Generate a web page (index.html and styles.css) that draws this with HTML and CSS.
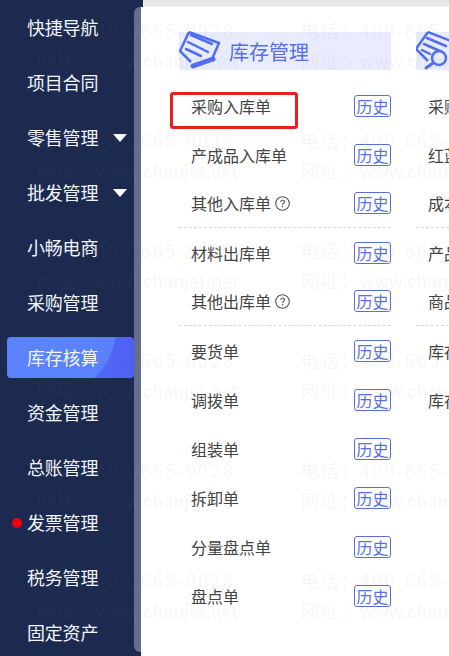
FILE: index.html
```html
<!DOCTYPE html>
<html>
<head>
    <meta charset="utf-8">
    <title>库存核算</title>
    <link rel="stylesheet" href="styles.css">
</head>
<body>
    <div class="sidebar">
        <div class="nav">
            <div class="nav-item">快捷导航</div>
            <div class="nav-item">项目合同</div>
            <div class="nav-item has-sub">零售管理</div>
            <div class="nav-item has-sub">批发管理</div>
            <div class="nav-item">小畅电商</div>
            <div class="nav-item">采购管理</div>
            <div class="nav-item active">库存核算</div>
            <div class="nav-item">资金管理</div>
            <div class="nav-item">总账管理</div>
            <div class="nav-item has-dot">发票管理</div>
            <div class="nav-item">税务管理</div>
            <div class="nav-item">固定资产</div>
        </div>
        <div class="scrollbar"></div>
    </div>

    <div class="main">
        <div class="top-strip"></div>
        <div class="groups">
            <div class="group">
                <div class="group-head">
                    <svg class="head-icon" viewBox="0 0 44 40" width="44" height="40">
                        <path d="M10 1 L1 20 L12 31 M10 1 L40 12 L33 28" fill="none" stroke="#4f6ef2" stroke-width="2.5" stroke-linejoin="round"/>
                        <path d="M12 4 L33 13 M9 11 L29 21 M7 18 L22 25" fill="none" stroke="#4f6ef2" stroke-width="2.5" stroke-linecap="round"/>
                        <path d="M14 35 L34 28" fill="none" stroke="#4f6ef2" stroke-width="5" stroke-linecap="round"/>
                    </svg>
                    <span class="head-title">库存管理</span>
                </div>
                <div class="row"><span>采购入库单</span><a class="history">历史</a></div>
                <div class="row"><span>产成品入库单</span><a class="history">历史</a></div>
                <div class="row split">
                    <span class="with-help">其他入库单
                        <svg class="help" viewBox="0 0 15 15" width="15" height="15">
                            <circle cx="7.5" cy="7.5" r="6.8" fill="none" stroke="#555" stroke-width="1.1"/>
                            <path d="M5.6 6 C5.6 3.6 9.5 3.6 9.5 5.8 C9.5 7.2 7.5 7.2 7.5 8.9" fill="none" stroke="#555" stroke-width="1.1"/>
                            <circle cx="7.5" cy="10.8" r="0.8" fill="#555"/>
                        </svg>
                    </span>
                    <a class="history">历史</a>
                </div>
                <div class="row"><span>材料出库单</span><a class="history">历史</a></div>
                <div class="row split">
                    <span class="with-help">其他出库单
                        <svg class="help" viewBox="0 0 15 15" width="15" height="15">
                            <circle cx="7.5" cy="7.5" r="6.8" fill="none" stroke="#555" stroke-width="1.1"/>
                            <path d="M5.6 6 C5.6 3.6 9.5 3.6 9.5 5.8 C9.5 7.2 7.5 7.2 7.5 8.9" fill="none" stroke="#555" stroke-width="1.1"/>
                            <circle cx="7.5" cy="10.8" r="0.8" fill="#555"/>
                        </svg>
                    </span>
                    <a class="history">历史</a>
                </div>
                <div class="row"><span>要货单</span><a class="history">历史</a></div>
                <div class="row"><span>调拨单</span><a class="history">历史</a></div>
                <div class="row"><span>组装单</span><a class="history">历史</a></div>
                <div class="row"><span>拆卸单</span><a class="history">历史</a></div>
                <div class="row"><span>分量盘点单</span><a class="history">历史</a></div>
                <div class="row"><span>盘点单</span><a class="history">历史</a></div>
            </div>

            <div class="group">
                <div class="group-head">
                    <svg class="head-icon" viewBox="0 0 44 40" width="44" height="40">
                        <path d="M12 1 L0 18 L12 30 M12 1 L40 12" fill="none" stroke="#4f6ef2" stroke-width="2.5" stroke-linejoin="round"/>
                        <path d="M11 7 L30 15 M8 13 L24 20 M6 19 L14 23" fill="none" stroke="#4f6ef2" stroke-width="2.5" stroke-linecap="round"/>
                        <circle cx="23" cy="27" r="7" fill="none" stroke="#4f6ef2" stroke-width="2.5"/>
                        <path d="M17 32 L10 37" fill="none" stroke="#4f6ef2" stroke-width="3" stroke-linecap="round"/>
                    </svg>
                </div>
                <div class="row"><span>采购单查询</span></div>
                <div class="row"><span>红蓝字回冲</span></div>
                <div class="row split"><span>成本调整单</span></div>
                <div class="row"><span>产品成本</span></div>
                <div class="row split"><span>商品成本</span></div>
                <div class="row"><span>库存查询</span></div>
                <div class="row"><span>库存台账</span></div>
            </div>
        </div>
    </div>

    <div class="mark-box"></div>

    <div class="watermark">
        <div class="wm">电话：<span class="tel">400-665-0028</span><br>网址：<span class="net">www.chanjet.net</span></div>
        <div class="wm">电话：<span class="tel">400-665-0028</span><br>网址：<span class="net">www.chanjet.net</span></div>
        <div class="wm">电话：<span class="tel">400-665-0028</span><br>网址：<span class="net">www.chanjet.net</span></div>
        <div class="wm">电话：<span class="tel">400-665-0028</span><br>网址：<span class="net">www.chanjet.net</span></div>
        <div class="wm">电话：<span class="tel">400-665-0028</span><br>网址：<span class="net">www.chanjet.net</span></div>
        <div class="wm">电话：<span class="tel">400-665-0028</span><br>网址：<span class="net">www.chanjet.net</span></div>
        <div class="wm">电话：<span class="tel">400-665-0028</span><br>网址：<span class="net">www.chanjet.net</span></div>
        <div class="wm">电话：<span class="tel">400-665-0028</span><br>网址：<span class="net">www.chanjet.net</span></div>
        <div class="wm">电话：<span class="tel">400-665-0028</span><br>网址：<span class="net">www.chanjet.net</span></div>
        <div class="wm">电话：<span class="tel">400-665-0028</span><br>网址：<span class="net">www.chanjet.net</span></div>
        <div class="wm">电话：<span class="tel">400-665-0028</span><br>网址：<span class="net">www.chanjet.net</span></div>
        <div class="wm">电话：<span class="tel">400-665-0028</span><br>网址：<span class="net">www.chanjet.net</span></div>
    </div>
</body>
</html>
```

FILE: styles.css
```css
html, body {
    margin: 0;
    height: 100%;
}
body {
    display: flex;
    width: 449px;
    height: 656px;
    overflow: hidden;
    position: relative;
    background: #1c2a50;
    font-family: "Noto Sans CJK SC", "Liberation Sans", sans-serif;
}

/* left menu */
.sidebar {
    display: flex;
    width: 141px;
    flex: none;
}
.nav {
    width: 134px;
    padding-top: 7px;
}
.nav-item {
    position: relative;
    height: 41px;
    line-height: 41px;
    margin: 0 0 14px 7px;
    padding-left: 20px;
    font-size: 18px;
    letter-spacing: -0.2px;
    color: #f2f5fb;
    border-radius: 4px;
}
.nav-item.active {
    background:
        radial-gradient(circle 70px at 40px -10px, #5b86fb 0, #5a80fa 98%, transparent 100%),
        linear-gradient(90deg, #5a80fb, #4d60f5);
}
.has-sub::after {
    content: "";
    position: absolute;
    left: 106px;
    top: 17px;
    border-left: 7px solid transparent;
    border-right: 7px solid transparent;
    border-top: 8px solid #fff;
}
.has-dot::before {
    content: "";
    position: absolute;
    left: 5px;
    top: 16px;
    width: 10px;
    height: 10px;
    border-radius: 50%;
    background: #f5000f;
}
.scrollbar {
    width: 7px;
    height: 645px;
    margin-top: 7px;
    background: #646f8d;
    border-radius: 6px 0 0 6px;
}

/* right panel */
.main {
    flex: 1;
    min-width: 0;
    overflow: hidden;
}
.top-strip {
    height: 7px;
    margin-left: 2px;
    background: linear-gradient(#e2e2e4, #eeeeee);
}
.groups {
    display: flex;
    gap: 25px;
    height: 649px;
    padding: 25px 0 0 38px;
    box-sizing: border-box;
    background: #fff;
}
.group {
    width: 212px;
    flex: none;
}
.group-head {
    display: flex;
    align-items: center;
    height: 38px;
    margin-bottom: 11px;
    background: #e9ecfd;
}
.head-icon {
    flex: none;
    margin-right: 6px;
}
.head-title {
    font-size: 20px;
    color: #5a6fe4;
}
.row {
    display: flex;
    justify-content: space-between;
    align-items: center;
    box-sizing: border-box;
    height: 49px;
    padding-left: 12px;
    font-size: 16px;
    color: #444;
    white-space: nowrap;
}
.row.split {
    border-bottom: 1px dashed #d8d8d8;
}
.with-help {
    display: flex;
    align-items: center;
    gap: 4px;
}
.history {
    box-sizing: border-box;
    width: 37px;
    height: 22px;
    line-height: 20px;
    text-align: center;
    font-size: 16px;
    color: #5a6fe4;
    border: 1px solid #5a6fd6;
    border-radius: 3px;
}

/* red annotation drawn over the screenshot */
.mark-box {
    position: absolute;
    left: 170px;
    top: 92px;
    width: 128px;
    height: 37px;
    box-sizing: border-box;
    border: 3px solid #e5211d;
    border-radius: 3px;
}

.watermark {
    position: absolute;
    left: 37px;
    top: 15px;
    display: grid;
    grid-template-columns: repeat(2, 264px);
    grid-auto-rows: 110px;
    pointer-events: none;
}
.wm {
    font-size: 18px;
    line-height: 30px;
    letter-spacing: 1.6px;
    color: rgba(120, 120, 150, 0.08);
    white-space: nowrap;
}
.wm .tel {
    letter-spacing: 2.2px;
}
.wm .net {
    letter-spacing: 0;
}
```
